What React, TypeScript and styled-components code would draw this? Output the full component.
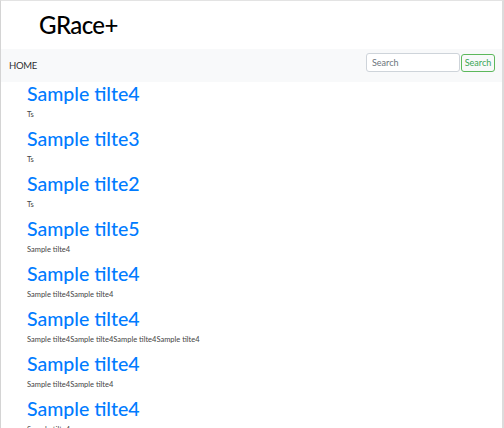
import React from "react";
import styled, { createGlobalStyle } from "styled-components";

const Global = createGlobalStyle`
  html, body { margin: 0; padding: 0; background: #fff; }
  body { font-family: Lato, "Noto Sans", sans-serif; color: #212529; }
`;

const Frame = styled.div`
  width: 504px;
  height: 428px;
  box-sizing: border-box;
  border-top: 1px solid #e3e3e3;
  border-left: 1px solid #d4d4d4;
  border-right: 2px solid #dcdcdc;
  overflow: hidden;
`;

const Header = styled.header`
  height: 48px;
  display: flex;
  align-items: center;
  padding-left: 38px;
`;

const Brand = styled.h1`
  margin: 0;
  font-size: 24px;
  font-weight: 500;
  letter-spacing: -0.6px;
  color: #000;
  line-height: 1;
`;

const Nav = styled.nav`
  height: 33px;
  background: #f8f9fa;
  display: flex;
  align-items: center;
  justify-content: space-between;
  padding: 0 7px 0 8px;
`;

const NavLink = styled.a`
  font-size: 9.5px;
  letter-spacing: -0.3px;
  color: rgba(0, 0, 0, 0.85);
  text-decoration: none;
`;

const SearchForm = styled.form`
  display: flex;
  align-items: center;
  gap: 1px;
  margin-bottom: 6px;
`;

const Input = styled.input`
  box-sizing: border-box;
  width: 94px;
  height: 19px;
  padding: 0 5px;
  border: 1px solid #ced4da;
  border-radius: 3px;
  font-family: inherit;
  font-size: 9px;
  color: #495057;
  background: #fff;
  &::placeholder { color: #6c757d; }
  outline: none;
`;

const Button = styled.button`
  box-sizing: border-box;
  width: 34px;
  height: 18px;
  padding: 0;
  border: 1px solid #5cb85c;
  border-radius: 3px;
  background: transparent;
  color: #3aa655;
  font-family: inherit;
  font-size: 9px;
`;

const List = styled.main`
  padding-left: 26px;
`;

const Item = styled.article`
  margin-bottom: 6px;
`;

const Title = styled.h2`
  margin: 0 0 3px;
  font-size: 19.5px;
  line-height: 24px;
  font-weight: 500;
  color: #007bff;
`;

const Desc = styled.p`
  margin: 0;
  font-size: 7.5px;
  line-height: 12px;
  color: #444;
`;

const posts = [
  { title: "Sample tilte4", body: "Ts" },
  { title: "Sample tilte3", body: "Ts" },
  { title: "Sample tilte2", body: "Ts" },
  { title: "Sample tilte5", body: "Sample tilte4" },
  { title: "Sample tilte4", body: "Sample tilte4Sample tilte4" },
  { title: "Sample tilte4", body: "Sample tilte4Sample tilte4Sample tilte4Sample tilte4" },
  { title: "Sample tilte4", body: "Sample tilte4Sample tilte4" },
  { title: "Sample tilte4", body: "Sample tilte4" },
];

export default function App() {
  return (
    <>
      <Global />
      <Frame>
        <Header>
          <Brand>GRace+</Brand>
        </Header>
        <Nav>
          <NavLink href="#">HOME</NavLink>
          <SearchForm onSubmit={(e) => e.preventDefault()}>
            <Input placeholder="Search" />
            <Button type="submit">Search</Button>
          </SearchForm>
        </Nav>
        <List>
          {posts.map((p, i) => (
            <Item key={i}>
              <Title>{p.title}</Title>
              <Desc>{p.body}</Desc>
            </Item>
          ))}
        </List>
      </Frame>
    </>
  );
}
